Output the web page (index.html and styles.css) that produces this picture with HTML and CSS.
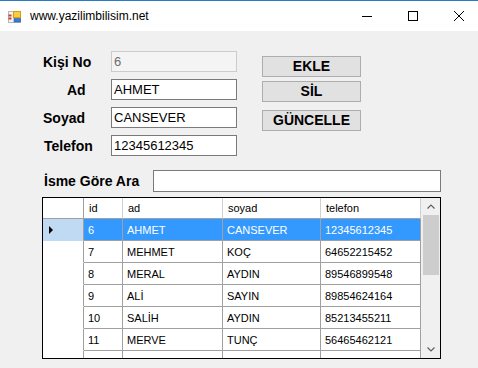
FILE: index.html
```html
<!DOCTYPE html>
<html lang="tr">
<head>
<meta charset="utf-8">
<title>www.yazilimbilisim.net</title>
<link rel="stylesheet" href="styles.css">
</head>
<body>
<div class="window">
  <header class="titlebar">
    <svg class="app-icon" width="14" height="14" viewBox="0 0 14 14">
      <rect x="0.5" y="1.5" width="12" height="11" fill="#f4f4f4" stroke="#b8b8b8"/>
      <rect x="0.5" y="4.5" width="3" height="2" fill="#d83a2e"/>
      <rect x="0.5" y="7.5" width="3" height="2" fill="#d83a2e"/>
      <rect x="5.5" y="1.5" width="7" height="6" fill="#f6cf3a" stroke="#d89a1c"/>
      <rect x="6" y="8.5" width="6.5" height="3.5" fill="#3f78d0" stroke="#2c5aa8" stroke-width="0.6"/>
    </svg>
    <span class="title">www.yazilimbilisim.net</span>
    <div class="caption-buttons">
      <span class="cap-btn"><svg width="10" height="10" viewBox="0 0 10 10"><line x1="0" y1="5.5" x2="10" y2="5.5" stroke="#000"/></svg></span>
      <span class="cap-btn"><svg width="10" height="10" viewBox="0 0 10 10"><rect x="0.5" y="0.5" width="9" height="9" fill="none" stroke="#000"/></svg></span>
      <span class="cap-btn"><svg width="10" height="10" viewBox="0 0 10 10"><path d="M0 0 L10 10 M10 0 L0 10" stroke="#000" stroke-width="1"/></svg></span>
    </div>
  </header>

  <main class="content">
    <section class="form-top">
      <div class="fields">
        <label class="lbl lbl-no">Kişi No</label>
        <input class="tb tb-disabled" value="6" disabled>
        <label class="lbl lbl-ad">Ad</label>
        <input class="tb" value="AHMET">
        <label class="lbl lbl-soyad">Soyad</label>
        <input class="tb" value="CANSEVER">
        <label class="lbl lbl-tel">Telefon</label>
        <input class="tb" value="12345612345">
      </div>
      <div class="buttons">
        <button class="btn btn-add">EKLE</button>
        <button class="btn">SİL</button>
        <button class="btn btn-update">GÜNCELLE</button>
      </div>
    </section>

    <div class="search">
      <label class="lbl search-lbl">İsme Göre Ara</label>
      <input class="tb search-tb" value="">
    </div>

    <div class="grid">
      <div class="grid-body">
        <div class="row head">
          <div class="cell rh"></div>
          <div class="cell">id</div>
          <div class="cell">ad</div>
          <div class="cell">soyad</div>
          <div class="cell">telefon</div>
        </div>
        <div class="row selected">
          <div class="cell rh"><span class="arrow"></span></div>
          <div class="cell">6</div>
          <div class="cell">AHMET</div>
          <div class="cell">CANSEVER</div>
          <div class="cell">12345612345</div>
        </div>
        <div class="row">
          <div class="cell rh"></div>
          <div class="cell">7</div>
          <div class="cell">MEHMET</div>
          <div class="cell">KOÇ</div>
          <div class="cell">64652215452</div>
        </div>
        <div class="row">
          <div class="cell rh"></div>
          <div class="cell">8</div>
          <div class="cell">MERAL</div>
          <div class="cell">AYDIN</div>
          <div class="cell">89546899548</div>
        </div>
        <div class="row">
          <div class="cell rh"></div>
          <div class="cell">9</div>
          <div class="cell">ALİ</div>
          <div class="cell">SAYIN</div>
          <div class="cell">89854624164</div>
        </div>
        <div class="row">
          <div class="cell rh"></div>
          <div class="cell">10</div>
          <div class="cell">SALİH</div>
          <div class="cell">AYDIN</div>
          <div class="cell">85213455211</div>
        </div>
        <div class="row">
          <div class="cell rh"></div>
          <div class="cell">11</div>
          <div class="cell">MERVE</div>
          <div class="cell">TUNÇ</div>
          <div class="cell">56465462121</div>
        </div>
        <div class="row">
          <div class="cell rh"></div>
          <div class="cell">12</div>
          <div class="cell">MERVE</div>
          <div class="cell">AYDIN</div>
          <div class="cell">56565465465</div>
        </div>
      </div>
      <div class="vscroll">
        <div class="sb-btn"><svg width="8" height="5" viewBox="0 0 8 5"><polyline points="0.5,4.5 4,1 7.5,4.5" fill="none" stroke="#606060" stroke-width="1.2"/></svg></div>
        <div class="sb-track"><div class="sb-thumb"></div></div>
        <div class="sb-btn"><svg width="8" height="5" viewBox="0 0 8 5"><polyline points="0.5,0.5 4,4 7.5,0.5" fill="none" stroke="#606060" stroke-width="1.2"/></svg></div>
      </div>
    </div>
  </main>
</div>
</body>
</html>
```

FILE: styles.css
```css
* { box-sizing: border-box; }

html, body {
  margin: 0;
  padding: 0;
  width: 478px;
  height: 368px;
  overflow: hidden;
  background: #f0f0f0;
  font-family: "Liberation Sans", Arial, sans-serif;
  color: #000;
}

.window {
  width: 478px;
  height: 368px;
  overflow: hidden;
  display: flex;
  flex-direction: column;
}

.titlebar {
  height: 31px;
  flex: none;
  background: #ffffff;
  border-top: 1px solid #2b7bc4;
  display: flex;
  align-items: center;
}

.app-icon {
  margin-left: 8px;
  margin-top: 2px;
  flex: none;
}

.title {
  margin-left: 8px;
  font-size: 12px;
  line-height: 14px;
}

.caption-buttons {
  margin-left: auto;
  margin-right: -4px;
  display: flex;
  height: 30px;
}

.cap-btn {
  width: 46px;
  height: 30px;
  display: flex;
  align-items: center;
  justify-content: center;
}

.content {
  flex: 1;
  background: #f0f0f0;
}

.form-top {
  display: flex;
  margin-top: 20px;
  padding-left: 43px;
}

.fields {
  display: grid;
  grid-template-columns: 68px 126px;
  grid-auto-rows: 21px;
  row-gap: 7px;
  align-items: center;
}

.lbl {
  font-size: 14px;
  font-weight: bold;
  line-height: 16px;
  white-space: nowrap;
}

.lbl-ad { padding-left: 24px; }
.lbl-tel { padding-left: 1px; }

.tb {
  height: 21px;
  width: 100%;
  margin: 0;
  border: 1px solid #7a7a7a;
  background: #ffffff;
  padding: 0 2px;
  font-family: "Liberation Sans", Arial, sans-serif;
  font-size: 13px;
  color: #000;
  outline: none;
}

.tb-disabled {
  border-color: #cccccc;
  background: #f4f4f4;
  color: #6d6d6d;
  -webkit-text-fill-color: #6d6d6d;
  opacity: 1;
}

.buttons {
  display: flex;
  flex-direction: column;
  margin-left: 25px;
  padding-top: 5px;
}

.btn {
  width: 99px;
  height: 21px;
  margin: 0;
  padding: 0;
  background: #e1e1e1;
  border: 1px solid #adadad;
  font-family: "Liberation Sans", Arial, sans-serif;
  font-size: 14px;
  font-weight: bold;
  color: #000;
  line-height: 17px;
}

.btn + .btn { margin-top: 4px; }
.btn.btn-update { margin-top: 8px; }

.search {
  display: flex;
  align-items: center;
  margin-top: 14px;
  padding-left: 44px;
}

.search-lbl {
  width: 109px;
}

.search-tb {
  width: 288px;
  height: 22px;
}

.grid {
  margin-top: 5px;
  margin-left: 42px;
  width: 399px;
  height: 162px;
  border: 1px solid #000;
  background: #ffffff;
  display: flex;
  overflow: hidden;
}

.grid-body {
  width: 378px;
  flex: none;
  overflow: hidden;
}

.row {
  display: grid;
  grid-template-columns: 41px 39px 100px 98px 100px;
  height: 22px;
  font-size: 11px;
}

.cell {
  border-right: 1px solid #a0a0a0;
  border-bottom: 1px solid #a0a0a0;
  padding-left: 4px;
  display: flex;
  align-items: center;
  white-space: nowrap;
  overflow: hidden;
  background: #ffffff;
}

.cell.rh {
  border-bottom-color: #ffffff;
}

.row.head {
  height: 21px;
}

.row.head .cell {
  border-right-color: #d0d0d0;
  border-bottom-color: #a0a0a0;
  padding-left: 5px;
}

.row.head .cell.rh {
  border-right-color: #a0a0a0;
}

.row.selected .cell {
  background: #3399ff;
  color: #ffffff;
}

.row.selected .cell.rh {
  background: #bfdaf2;
  border-bottom-color: #bfdaf2;
}

.arrow {
  display: block;
  margin-left: 2px;
  width: 0;
  height: 0;
  border-top: 4px solid transparent;
  border-bottom: 4px solid transparent;
  border-left: 4px solid #000;
}

.vscroll {
  flex: 1;
  background: #f0f0f0;
  display: flex;
  flex-direction: column;
  padding-left: 2px;
  padding-right: 1px;
}

.sb-btn {
  height: 17px;
  flex: none;
  display: flex;
  align-items: center;
  justify-content: center;
}

.sb-track {
  flex: 1;
}

.sb-thumb {
  height: 60px;
  background: #cdcdcd;
}
```
